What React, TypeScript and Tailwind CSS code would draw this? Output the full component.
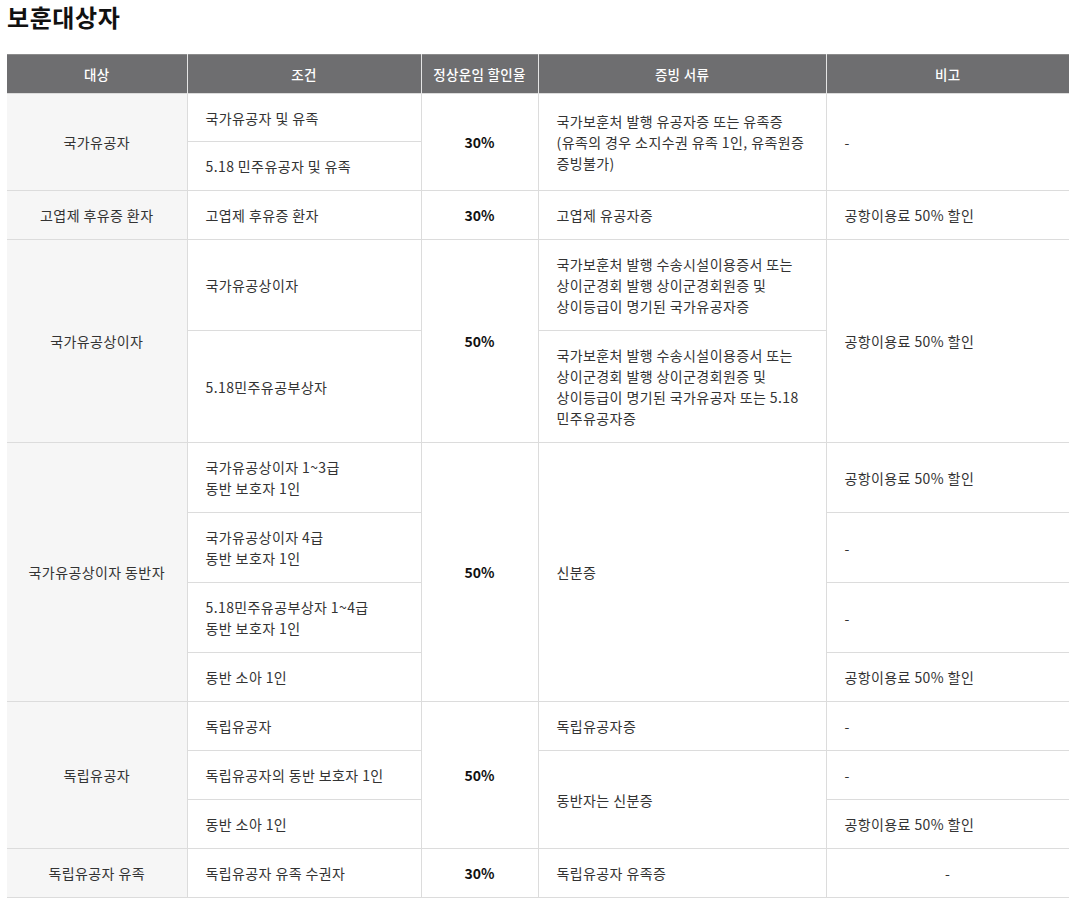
const th = "h-[39px] border-l border-[#e5e5e5] first:border-l-0 text-[13.5px] tracking-[0.3px] font-medium text-white text-center align-middle";
const left = "border border-[#dcdcdc] bg-[#f6f6f6] text-center align-middle border-l-0";
const td = "border border-[#dcdcdc] pl-[18px] pr-3 pt-[14px] pb-[13px] text-left align-middle";
const rate = "border border-[#dcdcdc] text-center align-middle text-[14px] tracking-normal font-bold text-[#111]";
const last = "border border-[#dcdcdc] border-r-0 pl-[18px] pr-3 pt-[14px] pb-[13px] text-left align-middle";

const App = () => {
    return (
        <main className="min-h-screen bg-white pl-[7px] text-[#333] font-['Noto_Sans_CJK_KR',sans-serif]">
            <h1 className="pt-[1px] text-[24px] tracking-[0.6px] font-bold leading-[32px] text-[#111]">보훈대상자</h1>

            <table className="mt-[21px] w-[1062px] table-fixed border-collapse text-[14px] tracking-[0.4px] leading-[21px]">
                <colgroup>
                    <col className="w-[180px]" />
                    <col className="w-[234px]" />
                    <col className="w-[117px]" />
                    <col className="w-[288px]" />
                    <col className="w-[243px]" />
                </colgroup>
                <thead>
                    <tr className="bg-[#6e6e70] border-t border-[#8c8c8c]">
                        <th className={th}>대상</th>
                        <th className={th}>조건</th>
                        <th className={th}>정상운임 할인율</th>
                        <th className={th}>증빙 서류</th>
                        <th className={th}>비고</th>
                    </tr>
                </thead>
                <tbody>
                    <tr>
                        <td rowSpan={2} className={left}>국가유공자</td>
                        <td className={td + " !pb-[12px]"}>국가유공자 및 유족</td>
                        <td rowSpan={2} className={rate}>30%</td>
                        <td rowSpan={2} className={td + " whitespace-nowrap"}>
                            국가보훈처 발행 유공자증 또는 유족증<br />
                            (유족의 경우 소지수권 유족 1인, 유족원증<br />
                            증빙불가)
                        </td>
                        <td rowSpan={2} className={last}>-</td>
                    </tr>
                    <tr>
                        <td className={td}>5.18 민주유공자 및 유족</td>
                    </tr>

                    <tr>
                        <td className={left}>고엽제 후유증 환자</td>
                        <td className={td}>고엽제 후유증 환자</td>
                        <td className={rate}>30%</td>
                        <td className={td}>고엽제 유공자증</td>
                        <td className={last}>공항이용료 50% 할인</td>
                    </tr>

                    <tr>
                        <td rowSpan={2} className={left}>국가유공상이자</td>
                        <td className={td}>국가유공상이자</td>
                        <td rowSpan={2} className={rate}>50%</td>
                        <td className={td + " whitespace-nowrap"}>
                            국가보훈처 발행 수송시설이용증서 또는<br />
                            상이군경회 발행 상이군경회원증 및<br />
                            상이등급이 명기된 국가유공자증
                        </td>
                        <td rowSpan={2} className={last}>공항이용료 50% 할인</td>
                    </tr>
                    <tr>
                        <td className={td}>5.18민주유공부상자</td>
                        <td className={td + " whitespace-nowrap"}>
                            국가보훈처 발행 수송시설이용증서 또는<br />
                            상이군경회 발행 상이군경회원증 및<br />
                            상이등급이 명기된 국가유공자 또는 5.18<br />
                            민주유공자증
                        </td>
                    </tr>

                    <tr>
                        <td rowSpan={4} className={left}>국가유공상이자 동반자</td>
                        <td className={td}>국가유공상이자 1~3급<br />동반 보호자 1인</td>
                        <td rowSpan={4} className={rate}>50%</td>
                        <td rowSpan={4} className={td}>신분증</td>
                        <td className={last}>공항이용료 50% 할인</td>
                    </tr>
                    <tr>
                        <td className={td}>국가유공상이자 4급<br />동반 보호자 1인</td>
                        <td className={last}>-</td>
                    </tr>
                    <tr>
                        <td className={td}>5.18민주유공부상자 1~4급<br />동반 보호자 1인</td>
                        <td className={last}>-</td>
                    </tr>
                    <tr>
                        <td className={td}>동반 소아 1인</td>
                        <td className={last}>공항이용료 50% 할인</td>
                    </tr>

                    <tr>
                        <td rowSpan={3} className={left}>독립유공자</td>
                        <td className={td}>독립유공자</td>
                        <td rowSpan={3} className={rate}>50%</td>
                        <td className={td}>독립유공자증</td>
                        <td className={last}>-</td>
                    </tr>
                    <tr>
                        <td className={td}>독립유공자의 동반 보호자 1인</td>
                        <td rowSpan={2} className={td}>동반자는 신분증</td>
                        <td className={last}>-</td>
                    </tr>
                    <tr>
                        <td className={td}>동반 소아 1인</td>
                        <td className={last}>공항이용료 50% 할인</td>
                    </tr>

                    <tr>
                        <td className={left}>독립유공자 유족</td>
                        <td className={td}>독립유공자 유족 수권자</td>
                        <td className={rate}>30%</td>
                        <td className={td}>독립유공자 유족증</td>
                        <td className={last + " !text-center !px-0"}>-</td>
                    </tr>
                </tbody>
            </table>
        </main>
    );
};

export default App;
